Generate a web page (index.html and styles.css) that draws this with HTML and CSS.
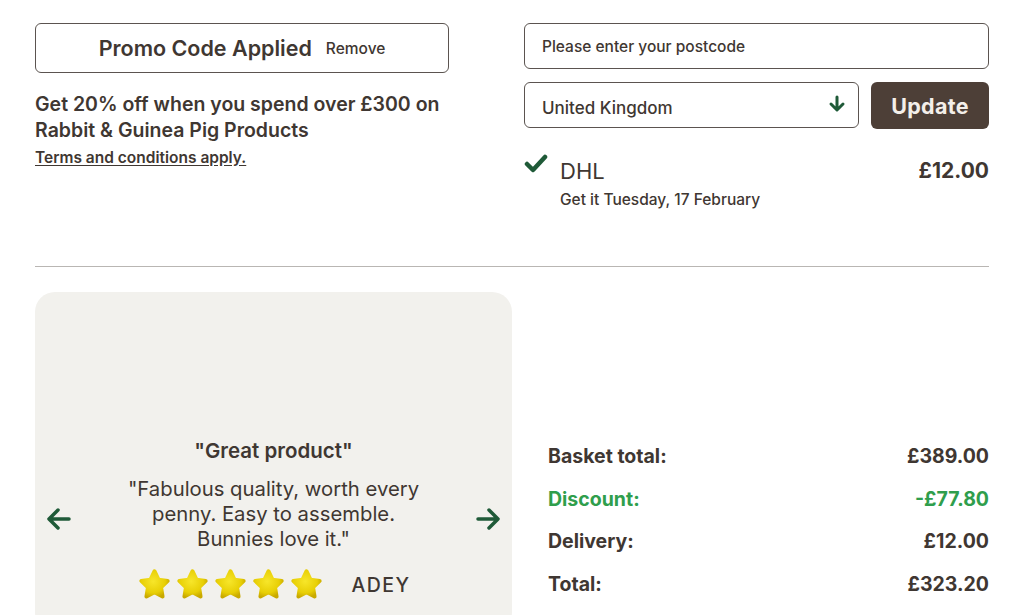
FILE: index.html
```html
<!DOCTYPE html>
<html>
<head>
  <link rel="stylesheet" href="styles.css">
</head>
<body>
  <div class="top">
    <div class="promo">
      <div class="promo-box">
        <span class="promo-title">Promo Code Applied</span>
        <span class="promo-remove">Remove</span>
      </div>
      <p class="promo-text">Get 20% off when you spend over £300 on Rabbit &amp; Guinea Pig Products</p>
      <a class="terms" href="#">Terms and conditions apply.</a>
    </div>

    <div class="delivery">
      <div class="field">Please enter your postcode</div>
      <div class="country-row">
        <div class="field select">
          <span>United Kingdom</span>
          <svg class="select-arrow" width="18" height="18" viewBox="0 0 18 18">
            <path d="M9 2v12M3 9l6 6 6-6" fill="none" stroke="#1f5a38" stroke-width="3" stroke-linecap="round" stroke-linejoin="round"/>
          </svg>
        </div>
        <button class="update">Update</button>
      </div>
      <div class="option">
        <svg class="tick" width="24" height="20" viewBox="0 0 24 20">
          <path d="M3 10l6 6L21 3" fill="none" stroke="#1f5a38" stroke-width="4.5" stroke-linecap="round" stroke-linejoin="round"/>
        </svg>
        <div class="option-info">
          <div class="option-head">
            <span class="carrier">DHL</span>
            <span class="option-price">£12.00</span>
          </div>
          <div class="option-date">Get it Tuesday, 17 February</div>
        </div>
      </div>
    </div>
  </div>

  <hr class="divider">

  <div class="bottom">
    <div class="review-card">
      <svg class="nav" width="26" height="24" viewBox="0 0 26 24">
        <path d="M23 12H4M12 3l-9 9 9 9" fill="none" stroke="#1f5a38" stroke-width="3.5" stroke-linecap="round" stroke-linejoin="round"/>
      </svg>
      <div class="review">
        <div class="review-title">"Great product"</div>
        <p class="review-body">"Fabulous quality, worth every penny. Easy to assemble. Bunnies love it."</p>
        <div class="review-foot">
          <div class="stars">
            <svg width="37" height="36" viewBox="0 0 24 24"><use href="#star"/></svg>
            <svg width="37" height="36" viewBox="0 0 24 24"><use href="#star"/></svg>
            <svg width="37" height="36" viewBox="0 0 24 24"><use href="#star"/></svg>
            <svg width="37" height="36" viewBox="0 0 24 24"><use href="#star"/></svg>
            <svg width="37" height="36" viewBox="0 0 24 24"><use href="#star"/></svg>
          </div>
          <span class="author">ADEY</span>
        </div>
      </div>
      <svg class="nav" width="26" height="24" viewBox="0 0 26 24">
        <path d="M3 12h19M14 3l9 9-9 9" fill="none" stroke="#1f5a38" stroke-width="3.5" stroke-linecap="round" stroke-linejoin="round"/>
      </svg>
    </div>

    <div class="summary">
      <div class="sum-row"><span>Basket total:</span><span>£389.00</span></div>
      <div class="sum-row discount"><span>Discount:</span><span>-£77.80</span></div>
      <div class="sum-row"><span>Delivery:</span><span>£12.00</span></div>
      <div class="sum-row"><span>Total:</span><span>£323.20</span></div>
    </div>
  </div>

  <svg width="0" height="0" class="defs">
    <defs>
      <radialGradient id="starFill" cx="45%" cy="40%" r="65%">
        <stop offset="0" stop-color="#f7e62a"/>
        <stop offset="0.7" stop-color="#e8cf05"/>
        <stop offset="1" stop-color="#c9a900"/>
      </radialGradient>
      <path id="star" d="M12 2.8l2.7 5.6 6.1.9-4.4 4.3 1 6.1L12 16.8l-5.4 2.9 1-6.1-4.4-4.3 6.1-.9z" fill="url(#starFill)" stroke="url(#starFill)" stroke-width="2.6" stroke-linejoin="round"/>
    </defs>
  </svg>
</body>
</html>
```

FILE: styles.css
```css
:root {
  --text-color: #3f3732;
  --brown: #4d3f37;
  --green: #1f5a38;
  --discount: #2f9e4c;
  --card-bg: #f2f1ed;
  --border: #5b5450;
}

body {
  margin: 0;
  padding: 23px 35px 0;
  background: #fff;
  color: var(--text-color);
  font-family: Inter, "Noto Sans", sans-serif;
  overflow: hidden;
  height: 615px;
  box-sizing: border-box;
}

.top {
  display: flex;
  gap: 75px;
}

.promo {
  width: 414px;
}

.promo-box {
  height: 50px;
  box-sizing: border-box;
  border: 1px solid var(--border);
  border-radius: 6px;
  display: flex;
  align-items: center;
  justify-content: center;
  gap: 14px;
}

.promo-title {
  font-size: 21.5px;
  font-weight: 600;
}

.promo-remove {
  font-size: 15.5px;
  font-weight: 500;
}

.promo-text {
  margin: 18px 0 4px;
  font-size: 19.5px;
  font-weight: 600;
  line-height: 26px;
}

.terms {
  color: var(--text-color);
  font-size: 15.5px;
  font-weight: 600;
  line-height: 20px;
  text-decoration: underline;
  text-underline-offset: 2px;
}

.delivery {
  flex: 1;
}

.field {
  height: 46px;
  box-sizing: border-box;
  border: 1px solid var(--border);
  border-radius: 6px;
  padding: 0 17px;
  display: flex;
  align-items: center;
  font-size: 15.5px;
  font-weight: 500;
}

.country-row {
  display: flex;
  gap: 12px;
  margin-top: 13px;
}

.select {
  flex: 1;
  justify-content: space-between;
  font-size: 17px;
  padding-top: 6px;
  padding-right: 12px;
}

.select-arrow {
  margin-top: -8px;
}

.update {
  width: 118px;
  height: 47px;
  border: none;
  border-radius: 6px;
  background: var(--brown);
  color: #f4efea;
  font-family: inherit;
  font-size: 21.5px;
  font-weight: 700;
  letter-spacing: 0.3px;
}

.option {
  display: flex;
  gap: 12px;
  margin-top: 29px;
}

.tick {
  flex: none;
  margin-top: -4px;
}

.option-info {
  flex: 1;
}

.option-head {
  display: flex;
  justify-content: space-between;
  align-items: center;
  line-height: 26px;
}

.carrier {
  font-size: 22px;
}

.option-price {
  font-size: 21px;
  font-weight: 700;
}

.option-date {
  margin-top: 6px;
  font-size: 15.5px;
  line-height: 19px;
  font-weight: 500;
}

.divider {
  border: none;
  border-top: 1px solid #b9b6b3;
  margin: 57px 0 25px;
}

.bottom {
  display: flex;
  gap: 36px;
}

.review-card {
  width: 477px;
  height: 340px;
  background: var(--card-bg);
  border-radius: 20px;
  display: flex;
  align-items: flex-start;
  justify-content: space-between;
  padding: 0 11px;
  box-sizing: border-box;
}

.nav {
  margin-top: 215px;
}

.review {
  flex: 1;
  text-align: center;
  padding-top: 147px;
}

.review-title {
  font-size: 20.5px;
  font-weight: 600;
  line-height: 24px;
}

.review-body {
  margin: 13px auto 0;
  width: 300px;
  font-size: 20.3px;
  line-height: 25px;
}

.review-foot {
  display: flex;
  align-items: center;
  justify-content: center;
  gap: 26px;
  margin-top: 16px;
}

.stars {
  display: flex;
  gap: 1px;
}

.author {
  font-size: 19.5px;
  font-weight: 500;
  letter-spacing: 1.5px;
}

.summary {
  flex: 1;
  padding-top: 151px;
}

.sum-row {
  display: flex;
  justify-content: space-between;
  font-size: 19.5px;
  font-weight: 700;
  line-height: 26px;
  margin-bottom: 16.5px;
}

.discount {
  color: var(--discount);
}

.defs {
  position: absolute;
}
```
